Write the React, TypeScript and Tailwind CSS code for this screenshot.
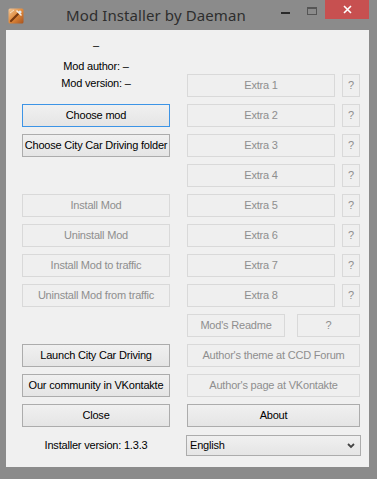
import React from "react";

type BtnProps = {
  label: string;
  disabled?: boolean;
  focused?: boolean;
  className?: string;
};

function Btn({ label, disabled, focused, className = "" }: BtnProps) {
  const base =
    "h-[23px] flex items-center justify-center text-[11px] leading-none tracking-[-0.2px] whitespace-nowrap shrink-0";
  const look = disabled
    ? "border border-[#d9d9d9] bg-[#efefef] text-[#8e8e8e]"
    : focused
    ? "border border-[#3c94e6] bg-gradient-to-b from-[#f0f0f0] to-[#e5e5e5] text-black"
    : "border border-[#acacac] bg-gradient-to-b from-[#f0f0f0] to-[#e5e5e5] text-black";
  return <div className={`${base} ${look} ${className}`}>{label}</div>;
}

function ExtraRow({ n }: { n: number }) {
  return (
    <div className="flex items-center justify-between">
      <Btn label={`Extra ${n}`} disabled className="w-[148px]" />
      <Btn label="?" disabled className="w-[18px]" />
    </div>
  );
}

function AppIcon() {
  return (
    <svg width="16" height="16" viewBox="0 0 16 16">
      <defs>
        <linearGradient id="ig" x1="0" y1="0" x2="1" y2="1">
          <stop offset="0" stopColor="#f2c89a" />
          <stop offset="0.5" stopColor="#e08a3c" />
          <stop offset="1" stopColor="#a8521c" />
        </linearGradient>
      </defs>
      <rect x="0.5" y="0.5" width="15" height="15" rx="1.5" fill="url(#ig)" />
      <path d="M3 13 L10 6" stroke="#7a3a10" strokeWidth="2.2" strokeLinecap="round" />
      <path d="M9 3 L13 7" stroke="#f6efe6" strokeWidth="1.6" strokeLinecap="round" />
      <circle cx="12" cy="4" r="1.6" fill="#dfe8f0" />
      <path d="M2 5 L6 2" stroke="#f8e0c0" strokeWidth="1" />
    </svg>
  );
}

export default function App() {
  return (
    <div className="w-[377px] h-[479px] bg-[#8b8b8b] font-['Liberation_Sans',Arial,sans-serif] flex flex-col overflow-hidden">
      {/* Title bar */}
      <div className="h-[30px] flex items-start shrink-0">
        <div className="mt-[8px] ml-[8px]">
          <AppIcon />
        </div>
        <div className="ml-[42px] mt-[6px] text-[15px] leading-[18px] text-[#2e2e2e] font-['Noto_Sans',sans-serif] tracking-[0.1px]">
          Mod Installer by Daeman
        </div>
        <div className="ml-auto mt-[12px] w-[9px] h-[2px] bg-[#2a2a2a]" />
        <div className="ml-[17px] mt-[7px] w-[10px] h-[8px] border border-[#555] border-t-2" />
        <div className="ml-[8px] w-[44px] h-[19px] bg-[#c75050] flex items-center justify-center mr-[8px]">
          <svg width="9" height="9" viewBox="0 0 9 9">
            <path d="M1 1 L8 8 M8 1 L1 8" stroke="#fff" strokeWidth="1.6" />
          </svg>
        </div>
      </div>

      {/* Client area */}
      <div className="ml-[6px] w-[363px] h-[437px] bg-[#f0f0f0] flex pl-[16px] pr-[9px] text-[11px] text-black">
        {/* Left column */}
        <div className="w-[148px] flex flex-col">
          <div className="mt-[9px] h-[13px] leading-[13px] text-center">–</div>
          <div className="mt-[8px] h-[13px] leading-[13px] text-center tracking-[-0.2px]">Mod author: –</div>
          <div className="mt-[4px] h-[13px] leading-[13px] text-center tracking-[-0.2px]">Mod version: –</div>
          <Btn label="Choose mod" focused className="mt-[14px] w-[148px]" />
          <Btn label="Choose City Car Driving folder" className="mt-[7px] w-[148px]" />
          <Btn label="Install Mod" disabled className="mt-[37px] w-[148px]" />
          <Btn label="Uninstall Mod" disabled className="mt-[7px] w-[148px]" />
          <Btn label="Install Mod to traffic" disabled className="mt-[7px] w-[148px]" />
          <Btn label="Uninstall Mod from traffic" disabled className="mt-[7px] w-[148px]" />
          <Btn label="Launch City Car Driving" className="mt-[37px] w-[148px]" />
          <Btn label="Our community in VKontakte" className="mt-[7px] w-[148px]" />
          <Btn label="Close" className="mt-[7px] w-[148px]" />
          <div className="mt-[12px] h-[13px] leading-[13px] text-center tracking-[-0.2px]">
            Installer version: 1.3.3
          </div>
        </div>

        {/* Right column */}
        <div className="ml-[17px] w-[173px] flex flex-col pt-[44px] gap-[7px]">
          <ExtraRow n={1} />
          <ExtraRow n={2} />
          <ExtraRow n={3} />
          <ExtraRow n={4} />
          <ExtraRow n={5} />
          <ExtraRow n={6} />
          <ExtraRow n={7} />
          <ExtraRow n={8} />
          <div className="flex justify-between">
            <Btn label="Mod's Readme" disabled className="w-[98px]" />
            <Btn label="?" disabled className="w-[63px]" />
          </div>
          <Btn label="Author's theme at CCD Forum" disabled className="w-[173px]" />
          <Btn label="Author's page at VKontakte" disabled className="w-[173px]" />
          <Btn label="About" className="w-[173px]" />
          <div className="-ml-[1px] mt-[1px] w-[175px] h-[21px] border border-[#acacac] bg-gradient-to-b from-[#f0f0f0] to-[#e5e5e5] flex items-center pl-[3px] pr-[5px]">
            <span className="text-[11px] tracking-[-0.2px]">English</span>
            <svg className="ml-auto" width="8" height="6" viewBox="0 0 8 6">
              <path d="M1 1 L4 4 L7 1" stroke="#444" strokeWidth="1.8" fill="none" />
            </svg>
          </div>
        </div>
      </div>
    </div>
  );
}
